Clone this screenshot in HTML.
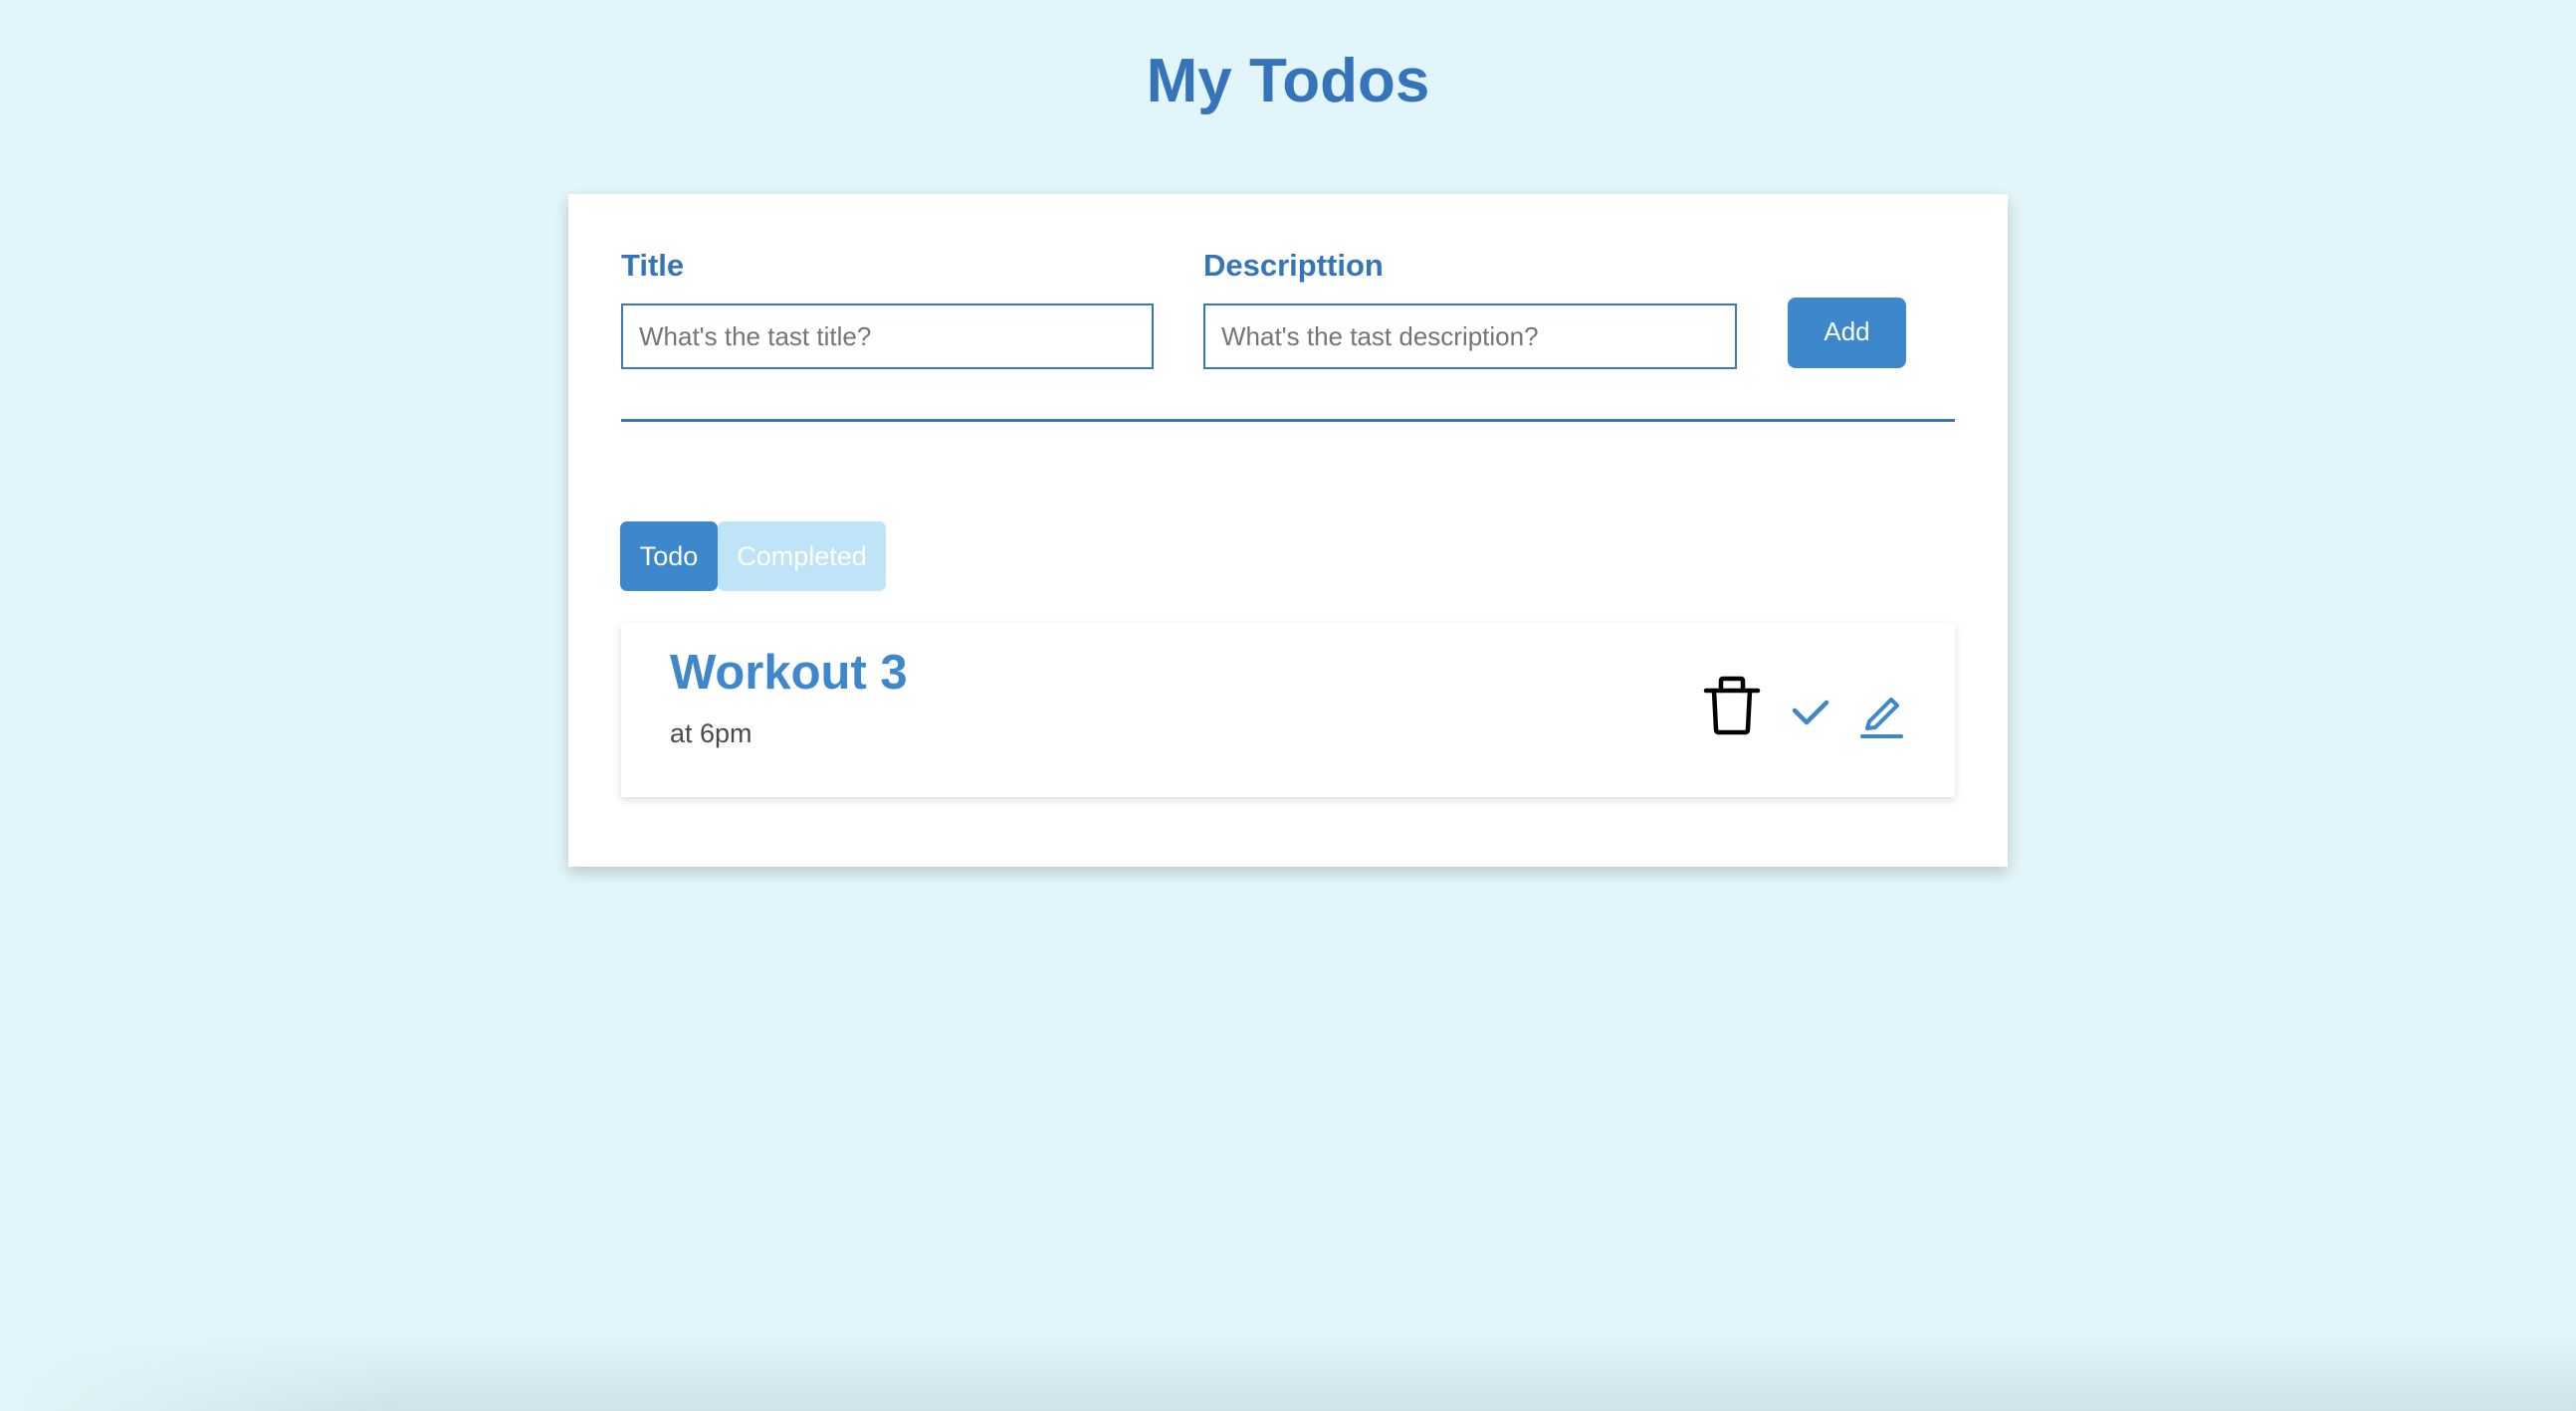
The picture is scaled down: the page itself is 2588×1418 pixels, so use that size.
<!DOCTYPE html>
<html><head><meta charset="utf-8"><style>
*{box-sizing:border-box;margin:0;padding:0}
html,body{width:2588px;height:1418px;overflow:hidden}
body{background:#e2f5fa;font-family:"Liberation Sans",Arial,sans-serif;position:relative}
.abs{position:absolute}
h1{position:absolute;left:0;width:2588px;text-align:center;top:46px;font-size:62px;line-height:72px;font-weight:bold;color:#3574ba}
.card{left:571px;top:195px;width:1446px;height:676px;background:#fff;box-shadow:0 6px 14px rgba(0,0,0,.18)}
.lbl{font-size:31px;font-weight:bold;color:#3574ba;line-height:36px;top:249px}
.inp{top:305px;height:66px;border:2px solid #3a78c0;font-size:26px;color:#757575;padding-left:16px;line-height:62px}
.btn{background:#3d87cc;color:#fff;font-size:26px;text-align:center}
.line{left:624px;top:421px;width:1340px;height:3px;background:#3a78c0}
.item{left:624px;top:626px;width:1340px;height:175px;background:#fff;box-shadow:0 3px 8px rgba(0,0,0,.13)}
.bottom{left:0;top:1340px;width:2588px;height:78px;background:linear-gradient(to bottom,rgba(200,222,228,0),rgba(200,222,228,.8));-webkit-mask-image:linear-gradient(to right,transparent 0,#000 400px,#000 100%)}
</style></head><body>
<h1>My Todos</h1>
<div class="abs card"></div>
<div class="abs lbl" style="left:624px">Title</div>
<div class="abs lbl" style="left:1209px">Descripttion</div>
<div class="abs inp" style="left:624px;width:535px">What's the tast title?</div>
<div class="abs inp" style="left:1209px;width:536px">What's the tast description?</div>
<div class="abs btn" style="left:1796px;top:299px;width:119px;height:71px;line-height:69px;border-radius:8px">Add</div>
<div class="abs line"></div>
<div class="abs btn" style="left:623px;top:524px;width:98px;height:70px;line-height:70px;border-radius:7px;font-size:27px">Todo</div>
<div class="abs btn" style="left:721px;top:524px;width:169px;height:70px;line-height:70px;border-radius:7px;font-size:27px;background:#bfe4f8">Completed</div>
<div class="abs item"></div>
<div class="abs" style="left:673px;top:647px;font-size:49px;font-weight:bold;color:#3d87cc;line-height:58px">Workout 3</div>
<div class="abs" style="left:673px;top:720px;font-size:27px;color:#4a4a4a;line-height:34px">at 6pm</div>
<svg class="abs" style="left:1710px;top:678px" width="60" height="62" viewBox="0 0 60 62"><g fill="none" stroke="#000" stroke-width="4.5" stroke-linecap="round" stroke-linejoin="round"><path d="M4 16H56"/><path d="M12 16L14 55Q14 58 17 58H43Q46 58 46 55L48 16"/><path d="M19 16V6Q19 4 21 4H39Q41 4 41 6V16"/></g></svg>
<svg class="abs" style="left:1800px;top:702px" width="42" height="34" viewBox="0 0 42 34"><path d="M3 12L15 24L35 4" fill="none" stroke="#3d87cc" stroke-width="4.5" stroke-linecap="round" stroke-linejoin="round"/></svg>
<svg class="abs" style="left:1868px;top:696px" width="46" height="46" viewBox="0 0 46 46"><g fill="none" stroke="#3d87cc" stroke-width="4" stroke-linecap="round" stroke-linejoin="round"><path d="M10 29L32 7L38 13L16 35L8 36Z"/><path d="M3 44H42"/></g></svg>
<div class="abs bottom"></div>
</body></html>
